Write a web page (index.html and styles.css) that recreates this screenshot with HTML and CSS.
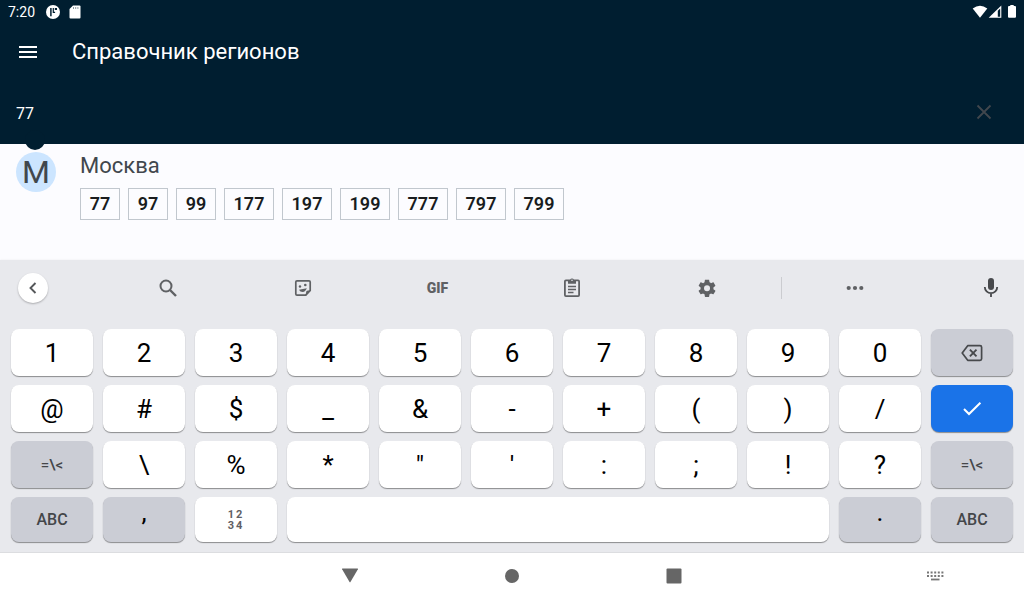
FILE: index.html
```html
<!DOCTYPE html>
<html lang="ru">
<head>
<meta charset="utf-8">
<meta name="viewport" content="width=device-width, initial-scale=1">
<title>Справочник регионов</title>
<link rel="stylesheet" href="styles.css">
</head>
<body>
<header class="top">
  <div class="status">
    <div class="status-group">
      <span class="clock">7:20</span>
      <svg class="status-app" width="14" height="14" viewBox="0 0 14 14"><circle cx="7" cy="7" r="7" fill="#fff"/><path d="M4.900 3v8.200" fill="none" stroke="#001e30" stroke-width="1.500"/><path d="M7.300 3v4.300h1.800" fill="none" stroke="#001e30" stroke-width="1.200"/><rect x="8.800" y="3" width="2.200" height="2" fill="#001e30"/></svg>
      <svg width="12" height="14" viewBox="0 0 12 14"><path d="M4 .5h6.500q1 0 1 1v11q0 1-1 1h-9q-1 0-1-1V4z" fill="#fff"/><path d="M4.500 2v2M6.700 2v2M8.900 2v2" stroke="#001e30" stroke-opacity=".45"/></svg>
    </div>
    <div class="status-group status-right">
      <svg width="16" height="14" viewBox="0 0 16 14"><path d="M.7 3.600Q8-2.200 15.300 3.600L8 12.700z" fill="#fff"/></svg>
      <svg width="14" height="14" viewBox="0 0 14 14"><path d="M13.300.5v12.300H.7z" fill="#fff"/><path d="M9.800 5.800 12.200 3.500v8.200H9.800z" fill="#001e30"/></svg>
      <svg class="battery" width="8" height="14" viewBox="0 0 8 14"><path d="M2.300 0h3.400v1H7q1 0 1 1v9.800q0 1-1 1H1q-1 0-1-1V2q0-1 1-1h1.300z" fill="#fff"/></svg>
    </div>
  </div>
  <div class="appbar">
    <button class="plain" type="button" aria-label="Меню"><svg width="24" height="24" viewBox="0 0 24 24"><path d="M3 6h18v2H3zM3 11h18v2H3zM3 16h18v2H3z" fill="#fff"/></svg></button>
    <h1 class="title">Справочник регионов</h1>
  </div>
  <div class="search">
    <input class="query" type="text" value="77" aria-label="Поиск региона">
    <button class="plain" type="button" aria-label="Очистить"><svg width="24" height="24" viewBox="0 0 24 24"><path d="m5.500 5.500 13 13m0-13-13 13" fill="none" stroke="#41474d" stroke-width="1.800"/></svg></button>
  </div>
  <span class="handle"></span>
</header>

<main class="regions">
  <article class="region">
    <div class="avatar">М</div>
    <div class="info">
      <h2 class="name">Москва</h2>
      <ul class="codes">
        <li>77</li><li>97</li><li>99</li><li class="long">177</li><li class="long">197</li><li class="long">199</li><li class="long">777</li><li class="long">797</li><li class="long">799</li>
      </ul>
    </div>
  </article>
</main>

<section class="keyboard" aria-label="Клавиатура">
  <div class="tools">
    <div class="tool-group">
      <button class="tool back" type="button" aria-label="Назад"><svg width="24" height="24" viewBox="0 0 24 24"><path d="m14.500 7-5 5 5 5" fill="none" stroke="#55575a" stroke-width="1.900"/></svg></button>
      <button class="tool" type="button" aria-label="Поиск"><svg width="24" height="24" viewBox="0 0 24 24"><circle cx="10" cy="10" r="5.500" fill="none" stroke="#5f6164" stroke-width="2"/><path d="m14 14 6 6" stroke="#5f6164" stroke-width="2.400"/></svg></button>
      <button class="tool" type="button" aria-label="Стикеры"><svg width="24" height="24" viewBox="0 0 24 24"><path d="M14.500 19.200H6q-1.200 0-1.200-1.200V6Q4.800 4.800 6 4.800h12q1.200 0 1.200 1.200v8.500z" fill="none" stroke="#5f6164" stroke-width="1.700"/><path d="M20 14.500h-3q-2 0-2 2V20z" fill="#5f6164"/><path d="M8 13.700q1 2.300 3.700 2.300t4.100-3.700z" fill="#5f6164"/><circle cx="9" cy="10.500" r="1.200" fill="#5f6164"/><circle cx="14.300" cy="9" r="1.300" fill="#5f6164"/></svg></button>
      <button class="tool gif" type="button">GIF</button>
      <button class="tool" type="button" aria-label="Буфер обмена"><svg width="24" height="24" viewBox="0 0 24 24"><rect x="4.900" y="4.400" width="14.200" height="15.700" rx="1" fill="none" stroke="#5f6164" stroke-width="1.800"/><path d="M8 4h2.100a2 2 0 0 1 3.800 0H16v3.800H8z" fill="#5f6164"/><circle cx="12" cy="4.300" r=".8" fill="#e8e9ed"/><path d="M8 10.500h8M8 13.500h8M8 16.500h5.500" stroke="#5f6164" stroke-width="1.600"/></svg></button>
      <button class="tool" type="button" aria-label="Настройки"><svg width="24" height="24" viewBox="0 0 24 24"><path fill="#5f6164" transform="translate(1.700 2) scale(.86)" d="M19.430 12.980c.04-.32.07-.64.07-.98s-.03-.66-.07-.98l2.110-1.650c.19-.15.24-.42.12-.64l-2-3.460c-.12-.22-.39-.3-.61-.22l-2.490 1c-.52-.4-1.080-.73-1.690-.98l-.38-2.650C14.460 2.180 14.250 2 14 2h-4c-.25 0-.46.18-.49.42l-.38 2.650c-.61.25-1.170.59-1.690.98l-2.490-1c-.23-.09-.49 0-.61.22l-2 3.460c-.13.22-.07.49.12.64l2.110 1.650c-.04.32-.07.65-.07.98s.03.66.07.98l-2.110 1.650c-.19.15-.24.42-.12.64l2 3.460c.12.22.39.3.61.22l2.490-1c.52.4 1.080.73 1.690.98l.38 2.650c.03.24.24.42.49.42h4c.25 0 .46-.18.49-.42l.38-2.650c.61-.25 1.170-.59 1.690-.98l2.490 1c.23.09.49 0 .61-.22l2-3.460c.12-.22.07-.49-.12-.64l-2.110-1.650zM12 15.500a3.500 3.500 0 1 1 0-7 3.500 3.500 0 0 1 0 7z"/></svg></button>
    </div>
    <span class="divider"></span>
    <div class="tool-group">
      <button class="tool" type="button" aria-label="Ещё"><svg width="24" height="24" viewBox="0 0 24 24" fill="#5f6164"><circle cx="5.700" cy="12" r="2.100"/><circle cx="12" cy="12" r="2.100"/><circle cx="18.300" cy="12" r="2.100"/></svg></button>
      <button class="tool" type="button" aria-label="Голосовой ввод"><svg width="24" height="24" viewBox="0 0 24 24"><rect x="9" y="2" width="6" height="12" rx="3" fill="#47494c"/><path d="M5.800 11a6.200 6.200 0 0 0 12.400 0M12 17v4" fill="none" stroke="#47494c" stroke-width="1.800"/></svg></button>
    </div>
  </div>
  <div class="keys">
    <button class="key" type="button">1</button><button class="key" type="button">2</button><button class="key" type="button">3</button><button class="key" type="button">4</button><button class="key" type="button">5</button><button class="key" type="button">6</button><button class="key" type="button">7</button><button class="key" type="button">8</button><button class="key" type="button">9</button><button class="key" type="button">0</button>
    <button class="key mod" type="button" aria-label="Удалить"><svg width="24" height="24" viewBox="0 0 24 24"><path d="M7.700 4.700H20q1.600 0 1.600 1.600v11.400q0 1.600-1.600 1.600H7.700L2.200 12z" fill="none" stroke="#47494c" stroke-width="1.700" stroke-linejoin="round"/><path d="m9.900 8.700 6.600 6.600m0-6.600-6.600 6.600" stroke="#47494c" stroke-width="1.900"/></svg></button>
    <button class="key" type="button">@</button><button class="key" type="button">#</button><button class="key" type="button">$</button><button class="key" type="button">_</button><button class="key" type="button">&amp;</button><button class="key" type="button">-</button><button class="key" type="button">+</button><button class="key" type="button">(</button><button class="key" type="button">)</button><button class="key" type="button">/</button>
    <button class="key enter" type="button" aria-label="Готово"><svg width="24" height="24" viewBox="0 0 24 24"><path d="m4 12 5 5L20.400 5.700" fill="none" stroke="#fff" stroke-width="2"/></svg></button>
    <button class="key mod sym" type="button">=\&lt;</button><button class="key" type="button">\</button><button class="key" type="button">%</button><button class="key" type="button">*</button><button class="key" type="button">"</button><button class="key" type="button">'</button><button class="key" type="button">:</button><button class="key" type="button">;</button><button class="key" type="button">!</button><button class="key" type="button">?</button><button class="key mod sym" type="button">=\&lt;</button>
    <button class="key mod abc" type="button">ABC</button><button class="key mod punct" type="button">,</button><button class="key numpad" type="button">12<br>34</button><button class="key space" type="button" aria-label="Пробел"></button><button class="key mod punct" type="button">.</button><button class="key mod abc" type="button">ABC</button>
  </div>
</section>

<nav class="nav">
  <div class="nav-main">
    <button class="nav-button" type="button" aria-label="Скрыть"><svg width="24" height="24" viewBox="0 0 24 24"><path d="M4.500 4.500h15q.8 0 .4.700l-7.300 12.600q-.6 1-1.200 0L4.100 5.200q-.4-.7.400-.7z" fill="#666"/></svg></button>
    <button class="nav-button" type="button" aria-label="Домой"><svg width="24" height="24" viewBox="0 0 24 24"><circle cx="12" cy="12" r="7" fill="#666"/></svg></button>
    <button class="nav-button" type="button" aria-label="Обзор"><svg width="24" height="24" viewBox="0 0 24 24"><rect x="4.500" y="4.500" width="15" height="15" rx="1" fill="#666"/></svg></button>
  </div>
  <button class="nav-button nav-ime" type="button" aria-label="Выбор клавиатуры"><svg width="24" height="24" viewBox="0 0 24 24"><path d="M4 8.500h16.400M4 12h16.400" stroke="#777" stroke-width="1.800" stroke-dasharray="2 1.600"/><path d="M8 15.500h8.500" stroke="#777" stroke-width="1.800"/></svg></button>
</nav>
</body>
</html>
```
FILE: styles.css
```css
* { box-sizing: border-box; }

body {
  margin: 0;
  min-height: 100vh;
  display: flex;
  flex-direction: column;
  background: #fcfcff;
  color: #191c1e;
  font-family: Roboto, "Noto Sans", sans-serif;
}

button, input { font: inherit; color: inherit; border: 0; padding: 0; background: none; }
svg { display: block; }
h1, h2, ul { margin: 0; padding: 0; font-weight: 400; }

.top { position: relative; background: #001e30; color: #fff; }

.status {
  display: flex;
  justify-content: space-between;
  height: 24px;
  padding: 0 8px;
}
.status-group { display: flex; align-items: center; gap: 9px; }
.status-right { gap: 0; }
.status-app { margin-left: 2px; }
.battery { margin-left: 6px; }
.clock { font-size: 14px; line-height: 24px; }

.appbar { display: flex; align-items: center; gap: 32px; height: 56px; padding: 0 16px; }
.plain { width: 24px; height: 24px; }
.title { font-size: 22px; line-height: 28px; }

.search { display: flex; align-items: center; height: 64px; padding: 0 28px 0 16px; }
.query { flex: 1; min-width: 0; padding-top: 3px; font-size: 16px; line-height: 24px; outline: 0; }

.handle {
  position: absolute;
  left: 25px;
  top: 130px;
  width: 20px;
  height: 20px;
  border-radius: 50%;
  background: #001e30;
}

.regions { flex: 1; }
.region { display: flex; gap: 24px; padding: 8px 16px; }
.avatar {
  width: 40px;
  height: 40px;
  border-radius: 50%;
  background: #cce5ff;
  color: #41474d;
  font-size: 32px;
  line-height: 40px;
  text-align: center;
}
.name { color: #41474d; font-size: 22px; line-height: 28px; }
.codes { display: flex; flex-wrap: wrap; gap: 8px; padding-top: 8px; list-style: none; }
.codes li {
  width: 40px;
  border: 1px solid #c1c7ce;
  font-size: 18px;
  font-weight: 600;
  line-height: 30px;
  text-align: center;
}
.codes .long { width: 50px; }

.keyboard { background: #e8e9ed; box-shadow: 0 0 2px #0001; padding: 0 11px 10px; }
.tools {
  display: grid;
  grid-template-columns: 704fr 2px 166fr;
  column-gap: 58px;
  align-items: center;
  height: 56px;
  padding: 0 7px;
}
.tool-group { display: flex; justify-content: space-between; }
.tool { display: flex; align-items: center; justify-content: center; width: 30px; height: 30px; }
.back { border-radius: 50%; background: #fff; box-shadow: 0 1px 2px #0004; }
.gif { color: #5f6164; font-size: 14px; font-weight: 900; }
.divider { justify-self: end; width: 1px; height: 22px; background: #cbccd0; }

.keys {
  display: grid;
  grid-template-columns: repeat(11, 1fr);
  grid-template-rows: repeat(3, 47px) 45px;
  gap: 9px 10px;
  padding-top: 13px;
}
.key {
  display: flex;
  align-items: center;
  justify-content: center;
  border-radius: 8px;
  background: #fff;
  box-shadow: 0 1px 1px #0006;
  color: #000;
  font-size: 26px;
  line-height: 32px;
}
.mod { background: #cbcdd5; color: #444649; }
.enter { background: #1a73e8; }
.sym { font-size: 15px; font-weight: 500; }
.abc { font-size: 16px; font-weight: 500; }
.punct { color: #000; padding-bottom: 16px; }
.numpad { color: #5f6164; font-size: 11px; font-weight: 700; line-height: 11px; letter-spacing: 2px; }
.space { grid-column: span 6; }

.nav {
  display: grid;
  grid-template-columns: 1fr auto 1fr;
  align-items: start;
  height: 48px;
  border-top: 1px solid #dcdde0;
  background: #fff;
}
.nav-main { display: flex; gap: 114px; grid-column: 2; }
.nav-button { display: flex; align-items: center; justify-content: center; width: 48px; height: 46px; }
.nav-ime { justify-self: end; margin-right: 65px; }
```
